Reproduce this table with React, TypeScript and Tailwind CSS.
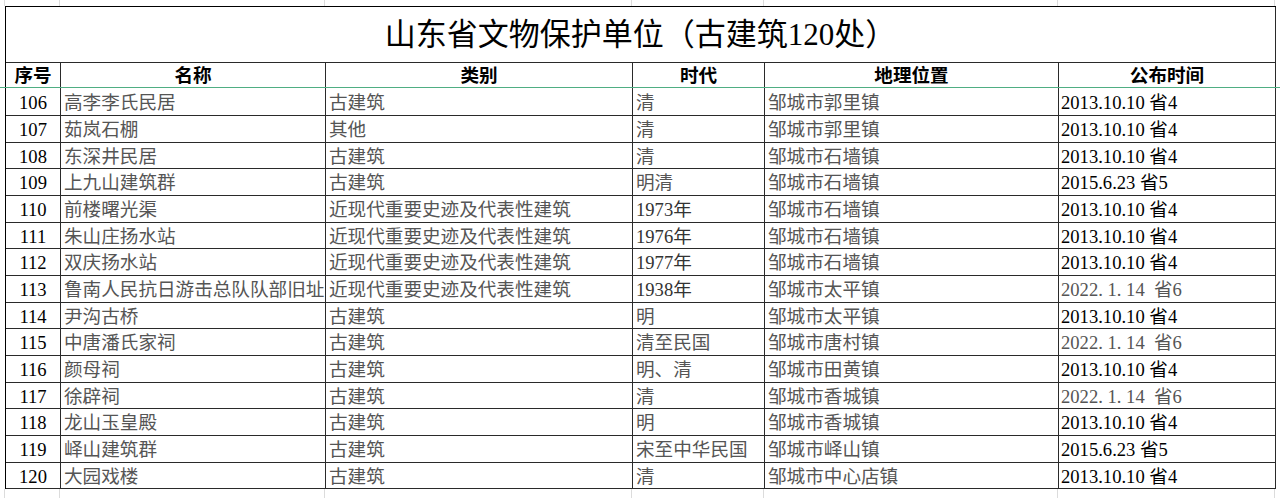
import React from "react";

type Row = [string, string, string, string, string, string];

const rows: Row[] = [
  ["106", "高李李氏民居", "古建筑", "清", "邹城市郭里镇", "2013.10.10 省4"],
  ["107", "茹岚石棚", "其他", "清", "邹城市郭里镇", "2013.10.10 省4"],
  ["108", "东深井民居", "古建筑", "清", "邹城市石墙镇", "2013.10.10 省4"],
  ["109", "上九山建筑群", "古建筑", "明清", "邹城市石墙镇", "2015.6.23 省5"],
  ["110", "前楼曙光渠", "近现代重要史迹及代表性建筑", "1973年", "邹城市石墙镇", "2013.10.10 省4"],
  ["111", "朱山庄扬水站", "近现代重要史迹及代表性建筑", "1976年", "邹城市石墙镇", "2013.10.10 省4"],
  ["112", "双庆扬水站", "近现代重要史迹及代表性建筑", "1977年", "邹城市石墙镇", "2013.10.10 省4"],
  ["113", "鲁南人民抗日游击总队队部旧址", "近现代重要史迹及代表性建筑", "1938年", "邹城市太平镇", "2022. 1. 14  省6"],
  ["114", "尹沟古桥", "古建筑", "明", "邹城市太平镇", "2013.10.10 省4"],
  ["115", "中唐潘氏家祠", "古建筑", "清至民国", "邹城市唐村镇", "2022. 1. 14  省6"],
  ["116", "颜母祠", "古建筑", "明、清", "邹城市田黄镇", "2013.10.10 省4"],
  ["117", "徐辟祠", "古建筑", "清", "邹城市香城镇", "2022. 1. 14  省6"],
  ["118", "龙山玉皇殿", "古建筑", "明", "邹城市香城镇", "2013.10.10 省4"],
  ["119", "峄山建筑群", "古建筑", "宋至中华民国", "邹城市峄山镇", "2015.6.23 省5"],
  ["120", "大园戏楼", "古建筑", "清", "邹城市中心店镇", "2013.10.10 省4"],
];

const heights = ["h-[27px]", "h-[27px]", "h-[26px]"];
const font = "font-['Liberation_Serif','Noto_Sans_CJK_SC',serif]";
const cell = "border-r border-b border-[#2a2a2a] flex items-center overflow-hidden whitespace-pre pt-[2px]";
const gray = "text-[#555]";

export default function App() {
  const strip = (cls: string) => (
    <div className={`flex ${cls}`}>
      <div className="w-[5px] border-r border-[#dcdcdc]" />
      {[55, 265, 307, 132, 294, 217].map((w, i) => (
        <div key={i} className="border-r border-[#dcdcdc]" style={{ width: w }} />
      ))}
    </div>
  );
  return (
    <div className={`relative w-[1280px] h-[498px] bg-white overflow-hidden ${font}`}>
      {strip("h-[6px]")}
      <div className="ml-[5px] w-[1271px] border-l border-t border-black grid grid-cols-[55px_265px_307px_132px_294px_217px]">
        <div className={`${cell} col-span-6 h-[56px] justify-center text-[31px] text-black`}>
          山东省文物保护单位（古建筑120处）
        </div>
        {["序号", "名称", "类别", "时代", "地理位置", "公布时间"].map((h) => (
          <div
            key={h}
            className={`${cell} h-[25px] justify-center text-[18.6px] font-bold text-black border-b-[#4fae83]`}
          >
            {h}
          </div>
        ))}
        {rows.map((r, i) => {
          const h = i === 0 ? "h-[28px]" : heights[i % 3];
          const dateGray = r[5].startsWith("2022");
          const eraGray = /年/.test(r[3]);
          return (
            <React.Fragment key={r[0]}>
              <div className={`${cell} ${h} justify-center text-[18.6px] text-black`}>{r[0]}</div>
              <div className={`${cell} ${h} pl-[3px] text-[18.6px] ${gray}`}>{r[1]}</div>
              <div className={`${cell} ${h} pl-[3px] text-[18.6px] ${gray}`}>{r[2]}</div>
              <div className={`${cell} ${h} pl-[3px] text-[18.6px] ${eraGray ? "text-[#333]" : gray}`}>{r[3]}</div>
              <div className={`${cell} ${h} pl-[3px] text-[18.6px] ${gray}`}>{r[4]}</div>
              <div className={`${cell} ${h} pl-[2px] text-[18.6px] ${dateGray ? gray : "text-black"}`}>{r[5]}</div>
            </React.Fragment>
          );
        })}
      </div>
      {strip("h-[12px]")}
      <div className="absolute left-0 right-0 top-[87px] h-px bg-[#4fae83]" />
    </div>
  );
}
